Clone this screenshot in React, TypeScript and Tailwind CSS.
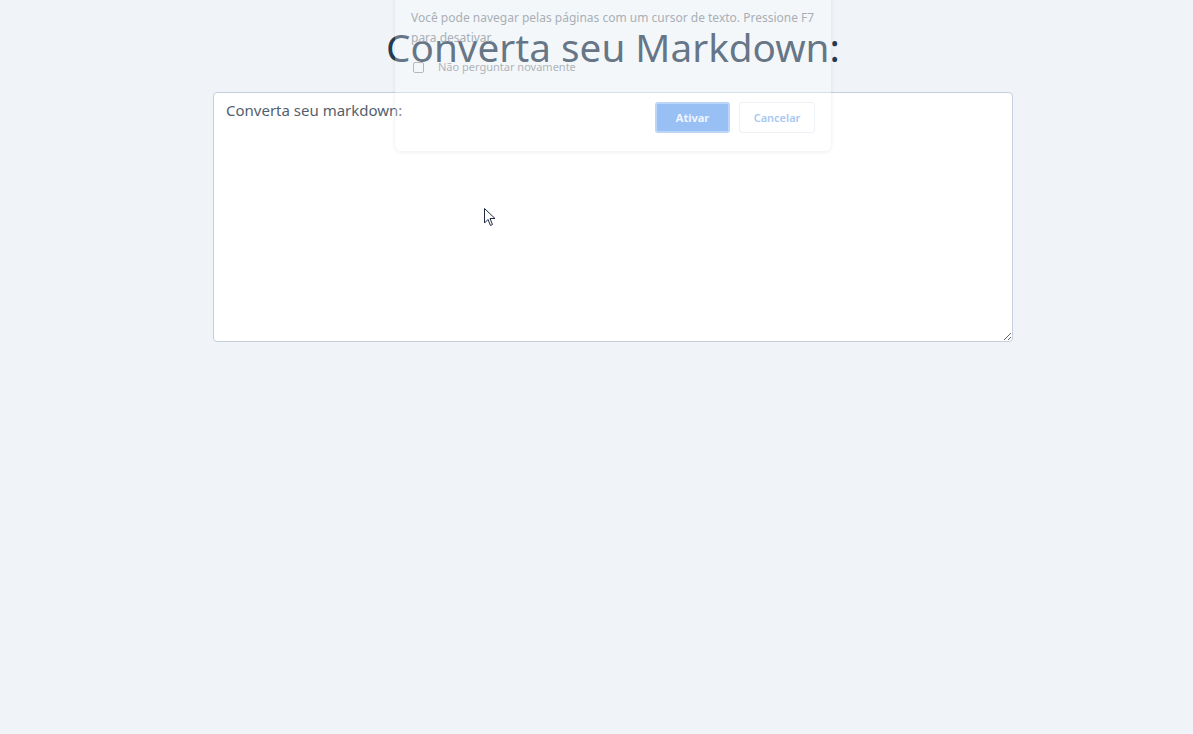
export default function App() {
  return (
    <div className="relative min-h-[734px] overflow-hidden bg-[#f0f4f8] font-['Noto_Sans',sans-serif]">
      <div className="ml-[213px] flex w-[800px] flex-col items-center">
        <h1 className="mt-[21px] mb-[19px] text-[38.7px] leading-[52px] font-normal text-[#243b53]">
          Converta seu Markdown:
        </h1>
        <textarea
          className="h-[250px] w-[800px] rounded border border-[#c5d0dc] bg-white px-[12px] py-[6px] text-[15px] text-[#52606d] outline-none placeholder:text-[#52606d]"
          placeholder="Converta seu markdown:"
        />
      </div>

      {/* caret browsing prompt, fading out */}
      <div className="absolute top-[-20px] left-[395px] w-[436px] rounded-b-md bg-white/30 shadow-[0_1px_4px_rgba(0,0,0,0.08)]">
        <div className="px-4 pt-[28px] pb-[18px] text-[12px] leading-[20px] text-[#a9afb6]">
          <p>Você pode navegar pelas páginas com um cursor de texto. Pressione F7 para desativar.</p>
          <label className="mt-[9px] flex items-center gap-[14px] pl-[2px]">
            <span className="h-[11px] w-[11px] rounded-[2px] border border-[#b4b8bd]" />
            <span className="text-[11px] text-[#b0b4b9]">Não perguntar novamente</span>
          </label>
          <div className="mt-[25px] flex justify-end gap-[9px]">
            <button className="h-[31px] w-[75px] rounded-[3px] border-2 border-[#bcd6f8] bg-[#99c0f4] text-[11px] font-bold text-[#eef5fe]">
              Ativar
            </button>
            <button className="h-[31px] w-[76px] rounded-[3px] border border-[#eef1f5] bg-white text-[11px] font-semibold text-[#a9c8f1]">
              Cancelar
            </button>
          </div>
        </div>
      </div>

      {/* mouse pointer */}
      <svg className="absolute top-[208px] left-[484px]" width="13" height="20" viewBox="0 0 13 20">
        <path d="M0.5 0.5 L0.5 15 L4 11.5 L6.5 17.5 L8.5 16.5 L6 10.5 L11 10.5 Z" fill="white" stroke="#1e2a44" strokeWidth="1" />
      </svg>
    </div>
  );
}
